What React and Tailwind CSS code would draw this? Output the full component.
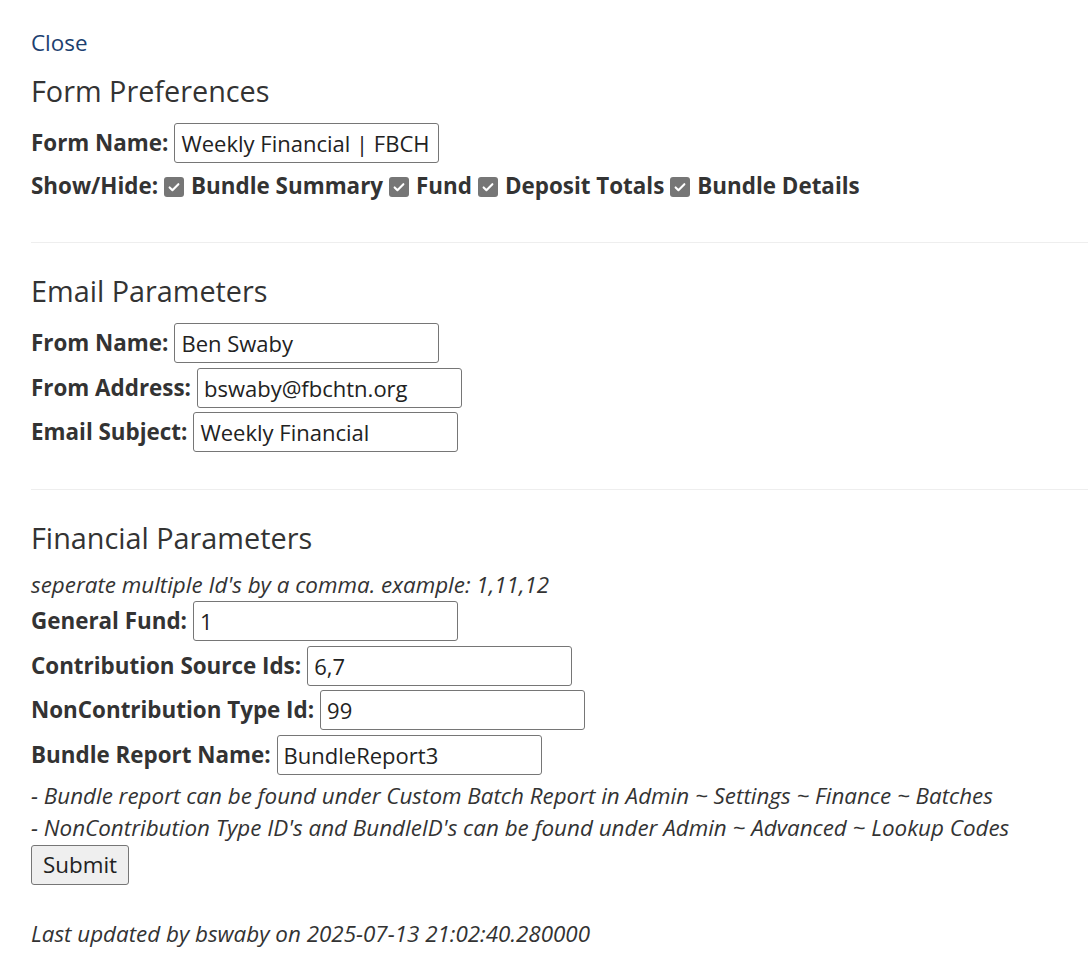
import React from "react";

function Check() {
  return (
    <span className="inline-flex h-[20px] w-[20px] shrink-0 items-center justify-center rounded-[3px] bg-[#767676]">
      <svg width="14" height="14" viewBox="0 0 16 16" fill="none">
        <path d="M3 8.5l3.2 3.2L13 4.8" stroke="#fff" strokeWidth="2.4" strokeLinecap="round" strokeLinejoin="round" />
      </svg>
    </span>
  );
}

function Field({ label, value }) {
  return (
    <div className="flex items-center gap-[6px]">
      <label className="font-bold">{label}</label>
      <input
        readOnly
        value={value}
        className="h-[40px] w-[265px] rounded-[3px] border border-[#767676] bg-white px-[6px] text-[22px] text-[#222] outline-none"
      />
    </div>
  );
}

export default function App() {
  return (
    <div className="min-h-screen bg-white pl-[31px] pt-[29px] text-[22.4px] leading-[28px] text-[#333]" style={{ fontFamily: '"Open Sans", "Liberation Sans", sans-serif' }}>
      <a href="#" className="text-[#1c3f70]">Close</a>

      <h2 className="mt-[16px] text-[28.8px] leading-[36px] font-normal">Form Preferences</h2>
      <div className="mt-[14px]">
        <Field label="Form Name:" value="Weekly Financial | FBCH" />
      </div>
      <div className="mt-[9px] flex h-[28px] items-center font-bold">
        <span>Show/Hide:</span>
        <span className="ml-[6px] mr-[7px]"><Check /></span>
        <span>Bundle Summary</span>
        <span className="ml-[6px] mr-[7px]"><Check /></span>
        <span>Fund</span>
        <span className="ml-[6px] mr-[7px]"><Check /></span>
        <span>Deposit Totals</span>
        <span className="ml-[6px] mr-[7px]"><Check /></span>
        <span>Bundle Details</span>
      </div>

      <hr className="mt-[42px] border-0 border-t border-[#eee]" />

      <h2 className="mt-[30px] text-[28.8px] leading-[36px] font-normal">Email Parameters</h2>
      <div className="mt-[14px] flex flex-col gap-[4.5px]">
        <Field label="From Name:" value="Ben Swaby" />
        <Field label="From Address:" value="bswaby@fbchtn.org" />
        <Field label="Email Subject:" value="Weekly Financial" />
      </div>

      <hr className="mt-[37px] border-0 border-t border-[#eee]" />

      <h2 className="mt-[30px] text-[28.8px] leading-[36px] font-normal">Financial Parameters</h2>
      <p className="mt-[15px] italic">seperate multiple Id's by a comma. example: 1,11,12</p>
      <div className="mt-[2px] flex flex-col gap-[4.5px]">
        <Field label="General Fund:" value="1" />
        <Field label="Contribution Source Ids:" value="6,7" />
        <Field label="NonContribution Type Id:" value="99" />
        <Field label="Bundle Report Name:" value="BundleReport3" />
      </div>
      <div className="mt-[5px] italic leading-[32px]">
        <p>- Bundle report can be found under Custom Batch Report in Admin ~ Settings ~ Finance ~ Batches</p>
        <p>- NonContribution Type ID's and BundleID's can be found under Admin ~ Advanced ~ Lookup Codes</p>
      </div>
      <button className="mt-[1px] h-[40px] rounded-[3px] border border-[#767676] bg-[#efefef] px-[11px] text-[22.4px] text-[#222]">
        Submit
      </button>
      <p className="mt-[35px] italic">Last updated by bswaby on 2025-07-13 21:02:40.280000</p>
    </div>
  );
}
